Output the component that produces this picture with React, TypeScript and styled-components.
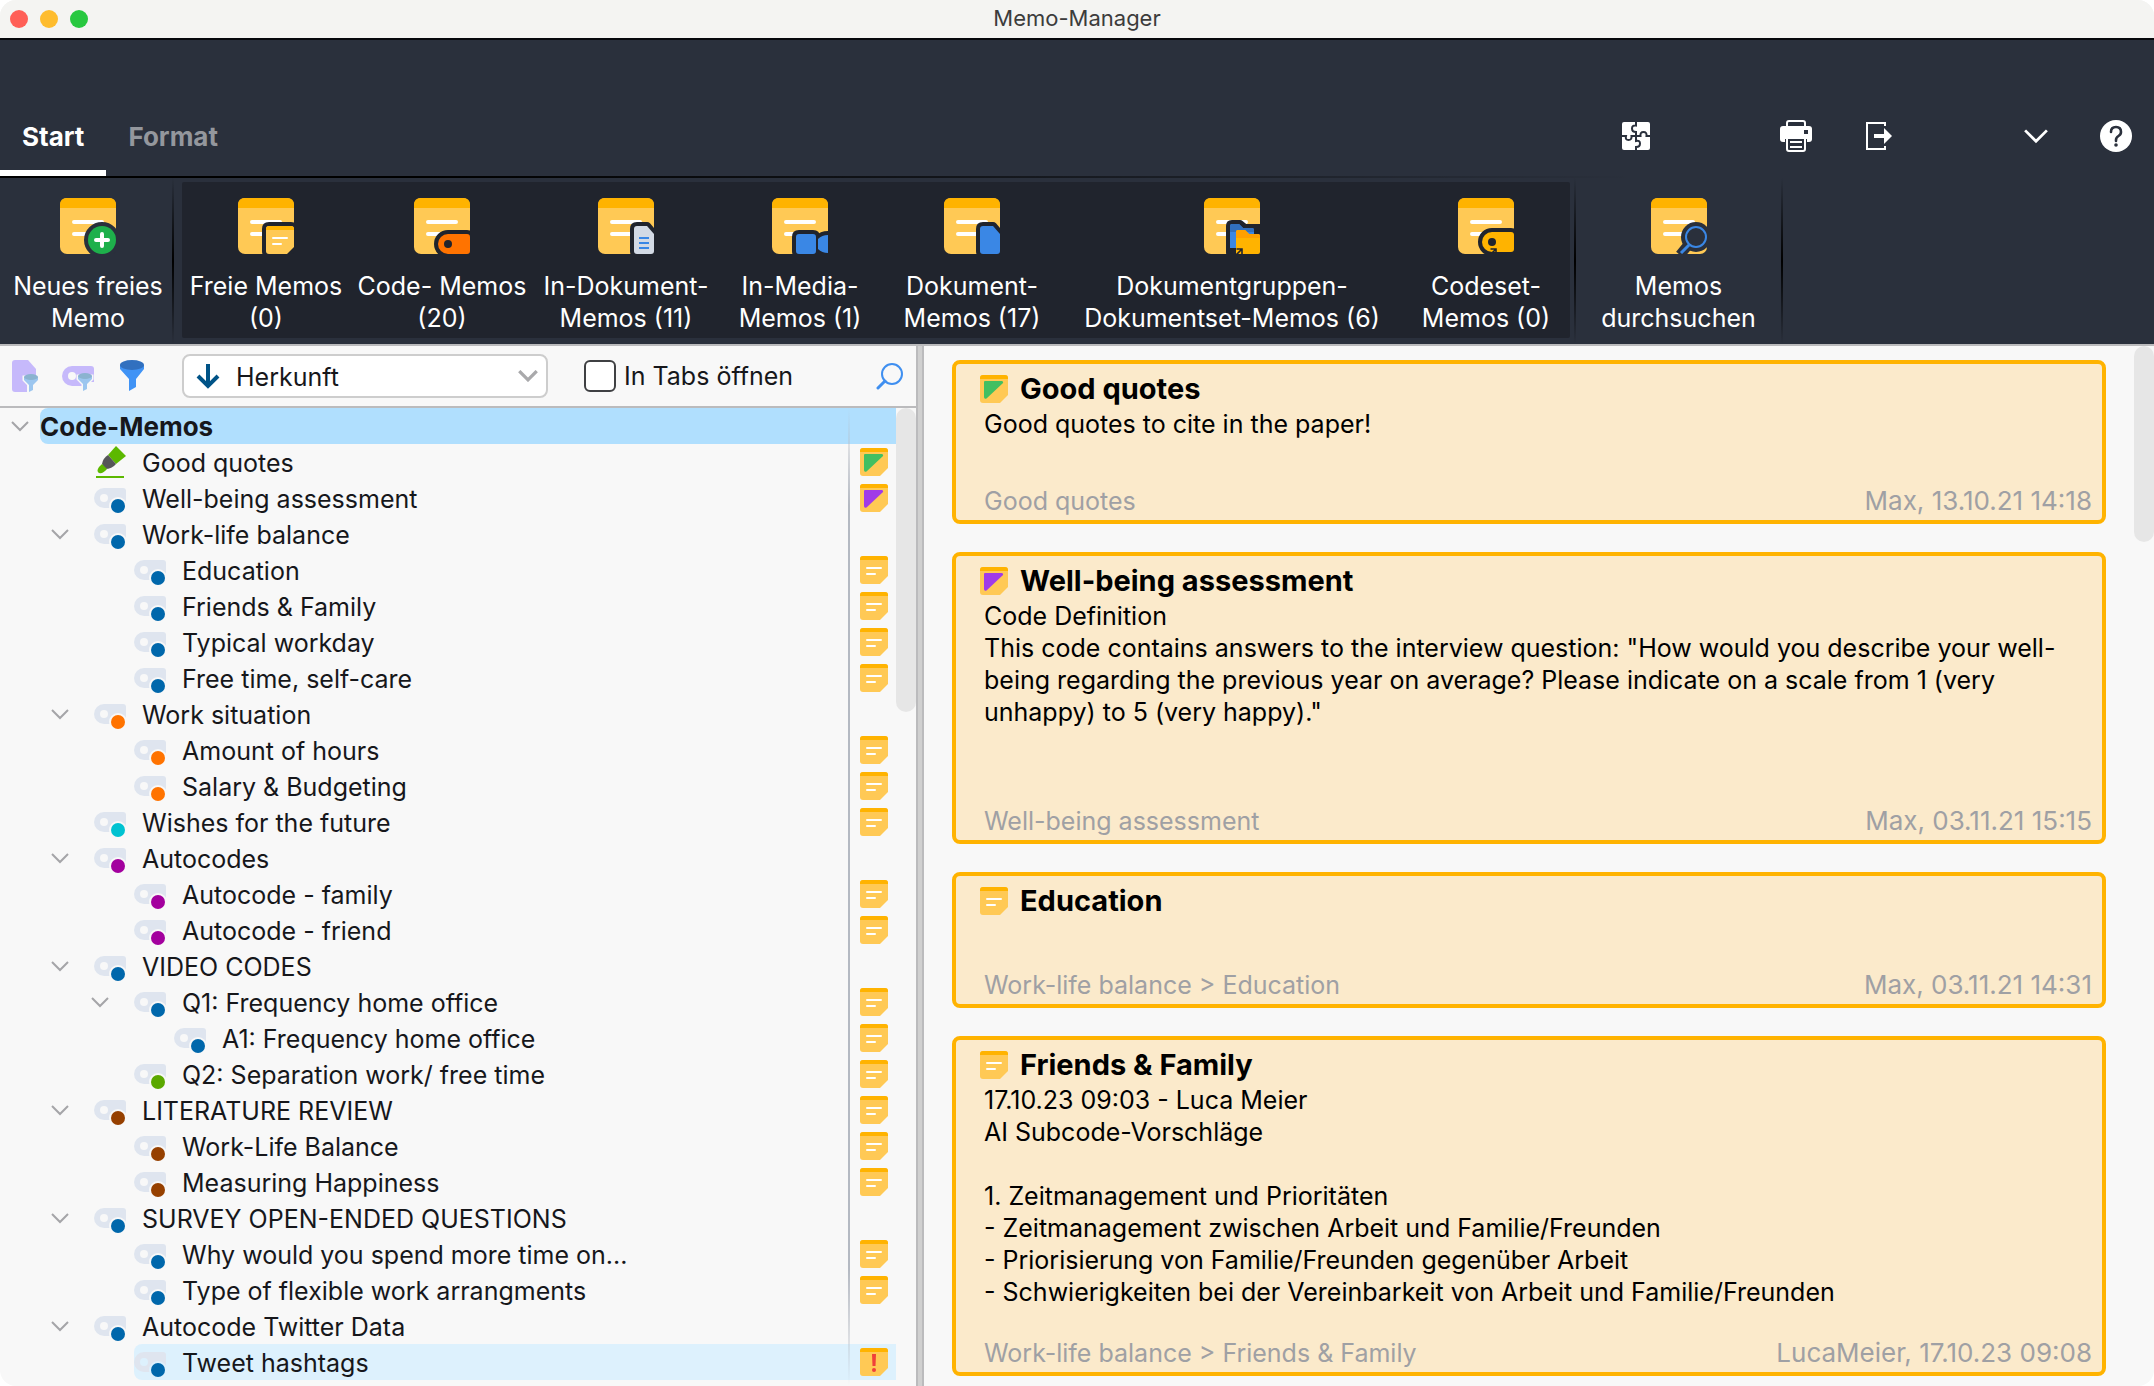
import React from "react";
import styled, { createGlobalStyle } from "styled-components";

const c = {
  header: "#2a303c",
  group: "#20242d",
  panel: "#f8f8f8",
  line: "#bbbbbd",
  amber: "#ffb300",
  note: "#ffc955",
  blue: "#3a87e5",
  tag: "#dfe5ef",
};

const Global = createGlobalStyle`
  html, body { margin: 0; background: #fff; }
  *, *::before, *::after { box-sizing: border-box; }
  body, button, select, input { font-family: Inter, "Liberation Sans", sans-serif; font-size: 25px; }
  button { border: 0; padding: 0; background: none; color: inherit; cursor: pointer; }
  ul { list-style: none; margin: 0; padding: 0; }
  h1, h2, p { margin: 0; }
  svg { display: block; flex: none; }
`;

const Window = styled.div`
  display: flex;
  flex-direction: column;
  height: 100vh;
  overflow: hidden;
  border-radius: 16px;
  background: ${c.panel};
  color: #16171b;
`;

const TitleBar = styled.header`
  display: grid;
  grid-template-columns: 1fr auto 1fr;
  align-items: center;
  flex: none;
  height: 40px;
  padding: 0 10px;
  background: #f4f4f2;
  border-bottom: 2px solid #06080c;
`;
const Lights = styled.div`
  display: flex;
  gap: 12px;
`;
const Light = styled.button<{ $color: string }>`
  width: 18px;
  height: 18px;
  border-radius: 50%;
  background: ${(p) => p.$color};
`;
const WindowTitle = styled.h1`
  padding-bottom: 2px;
  font-size: 22px;
  font-weight: 400;
  line-height: 32px;
  color: #3c3c3c;
`;

const Ribbon = styled.div`
  flex: none;
  background: ${c.header};
  color: #fff;
  border-bottom: 2px solid ${c.line};
`;
const RibbonTop = styled.div`
  display: flex;
  align-items: flex-end;
  justify-content: space-between;
  height: 136px;
`;
const Tabs = styled.nav`
  display: flex;
`;
const Tab = styled.button<{ $active?: boolean }>`
  height: 78px;
  padding: 4px 22px 0;
  font-size: 26px;
  font-weight: 700;
  color: ${(p) => (p.$active ? "#fff" : "#94979d")};
  border-bottom: 6px solid ${(p) => (p.$active ? "#fff" : "transparent")};
`;
const Tools = styled.div`
  display: flex;
  align-items: center;
  height: 80px;
  padding-right: 22px;
`;
const ToolButton = styled.button<{ $gap: number }>`
  margin-left: ${(p) => p.$gap}px;
`;
const Fade = styled.div`
  height: 2px;
  background: linear-gradient(to right, #000, #000 20%, transparent 76%);
`;
const RibbonRow = styled.div`
  display: flex;
  height: 166px;
  padding-left: 4px;
`;
const Divider = styled.div`
  width: 2px;
  background: linear-gradient(${c.header}, #000 50%, ${c.header});
`;
const Group = styled.div`
  display: flex;
  margin: 4px 4px 6px 8px;
  background: ${c.group};
  border-radius: 2px;
`;
const RibbonButton = styled.button<{ $width: number; $inGroup?: boolean }>`
  display: flex;
  flex-direction: column;
  align-items: center;
  gap: 16px;
  width: ${(p) => p.$width}px;
  padding-top: ${(p) => (p.$inGroup ? 16 : 20)}px;
  line-height: 32px;
  white-space: pre;
`;

const Main = styled.main`
  display: flex;
  flex: 1;
  min-height: 0;
`;
const Side = styled.section`
  display: flex;
  flex-direction: column;
  flex: none;
  width: 916px;
`;
const FilterBar = styled.div`
  display: flex;
  align-items: center;
  flex: none;
  height: 62px;
  padding: 0 12px;
  border-bottom: 2px solid ${c.line};
`;
const FilterButtons = styled.div`
  display: flex;
  align-items: center;
  gap: 24px;
  width: 170px;
`;
const SelectBox = styled.div`
  display: flex;
  align-items: center;
  width: 366px;
  height: 44px;
  padding: 0 8px 0 12px;
  background: #fff;
  border: 2px solid #cdcdcd;
  border-radius: 8px;
`;
const Select = styled.select`
  flex: 1;
  height: 40px;
  padding: 2px 0 0 16px;
  border: 0;
  background: transparent;
  color: inherit;
  appearance: none;
  outline: none;
`;
const CheckLabel = styled.label`
  display: flex;
  align-items: center;
  flex: 1;
  gap: 8px;
  margin-left: 36px;
`;
const Checkbox = styled.input`
  appearance: none;
  width: 32px;
  height: 32px;
  margin: 0;
  border: 2px solid #3f4043;
  border-radius: 6px;
  background: #fff;
`;
const TreeArea = styled.div`
  display: flex;
  flex: 1;
  min-height: 0;
  overflow: hidden;
`;
const Tree = styled.ul`
  flex: 1;
  position: relative;
`;
const ColumnLine = styled.li`
  position: absolute;
  top: 0;
  bottom: 0;
  right: 46px;
  width: 2px;
  background: linear-gradient(transparent, #b4b9c2 10%, #b4b9c2 88%, transparent);
`;
const Row = styled.li<{ $level: number }>`
  display: flex;
  height: 36px;
  padding-left: ${(p) => p.$level * 40}px;
`;
const Toggle = styled.button`
  display: flex;
  justify-content: center;
  align-items: center;
  width: 40px;
`;
const RowBody = styled.div<{ $bg?: string; $root?: boolean }>`
  display: flex;
  align-items: center;
  flex: 1;
  gap: 16px;
  padding-right: 8px;
  font-size: ${(p) => (p.$root ? 26 : 25)}px;
  font-weight: ${(p) => (p.$root ? 700 : 400)};
  background: ${(p) => p.$bg || "transparent"};
  border-radius: 8px 0 0 8px;
`;
const Spacer = styled.span`
  width: 14px;
`;
const RowText = styled.span`
  flex: 1;
  padding-top: 2px;
  line-height: 34px;
  white-space: nowrap;
`;
const Scroll = styled.div<{ $thumb: number }>`
  flex: none;
  width: 20px;
  &::before {
    content: "";
    display: block;
    height: ${(p) => p.$thumb}px;
    border-radius: 10px;
    background: #e6e6e6;
  }
`;
const Splitter = styled.div`
  flex: none;
  width: 8px;
  background: #d0d0d0;
  border: solid ${c.line};
  border-width: 0 2px;
`;
const Cards = styled.section`
  display: flex;
  flex-direction: column;
  flex: 1;
  gap: 28px;
  padding: 14px 28px 10px;
`;
const Card = styled.article<{ $min: number }>`
  display: flex;
  flex-direction: column;
  flex: none;
  min-height: ${(p) => p.$min}px;
  padding: 6px 10px 3px 28px;
  background: #fbeacb;
  border: 4px solid ${c.amber};
  border-radius: 8px;
  color: #000;
`;
const CardHead = styled.div`
  display: flex;
  align-items: center;
  gap: 12px;
  height: 38px;
  margin-left: -4px;
`;
const CardTitle = styled.h2`
  font-size: 29px;
  line-height: 36px;
`;
const CardText = styled.p`
  flex: 1;
  line-height: 32px;
  white-space: pre-line;
`;
const CardFoot = styled.footer`
  display: flex;
  justify-content: space-between;
  line-height: 32px;
  color: #9fa0a4;
`;
const CardDate = styled.time`
  font-size: 26px;
`;

type Badge = "plus" | "note" | "code" | "indoc" | "media" | "doc" | "groups" | "codeset" | "search";

function BadgeShape({ kind, bg }: { kind: Badge; bg: string }) {
  const cut = { stroke: bg, strokeWidth: 8, strokeLinejoin: "round" as const, paintOrder: "stroke" };
  const docPath = "M39 28H49L56 36V53Q56 56 53 56H39Q36 56 36 53V31Q36 28 39 28Z";
  const arrow = <path d="M31 58L38 51M32.500 51H38V57" fill="none" stroke={bg} strokeWidth="1.600" />;
  switch (kind) {
    case "plus":
      return (
        <g>
          <circle cx="42" cy="42" r="14" fill="#1eb04b" {...cut} />
          <path d="M42 36V48M36 42H48" stroke="#fff" strokeWidth="4" strokeLinecap="round" />
        </g>
      );
    case "note":
      return (
        <g>
          <path d="M31 28H53Q56 28 56 31V49L49 56H31Q28 56 28 53V31Q28 28 31 28Z" fill={c.note} {...cut} />
          <path d="M31 28H53Q56 28 56 31V32H28V31Q28 28 31 28Z" fill={c.amber} />
          <path d="M35 40H49M35 46H43" stroke="#fff" strokeWidth="2" strokeLinecap="round" />
        </g>
      );
    case "code":
      return (
        <g>
          <path d="M34 36H53Q56 36 56 39V53Q56 56 53 56H34A10 10 0 0 1 34 36Z" fill="#ff7300" {...cut} />
          <circle cx="34" cy="46" r="4" fill={bg} />
        </g>
      );
    case "indoc":
      return (
        <g>
          <path d={docPath} fill="#d3dae5" {...cut} />
          <path d="M41 40H51M41 45H51M41 50H51" stroke={c.blue} strokeWidth="2" />
        </g>
      );
    case "doc":
      return <path d={docPath} fill={c.blue} {...cut} />;
    case "media":
      return (
        <path
          d="M27 36H41Q44 36 44 39V53Q44 56 41 56H27Q24 56 24 53V39Q24 36 27 36ZM46 41Q50 37 56 37V55Q50 55 46 51Z"
          fill={c.blue}
          {...cut}
        />
      );
    case "groups":
      return (
        <g>
          <path d="M28 26H36L41 30H56V56H28Q26 56 26 54V28Q26 26 28 26Z" fill={bg} {...cut} />
          <path d="M28 26H35L39 30H48Q50 30 50 32V50H26V28Q26 26 28 26Z" fill={c.blue} />
          <path d="M28 26H35L39 30H48Q50 30 50 32V34H26V28Q26 26 28 26Z" fill="#3170bf" />
          <path d="M34 32H41L45 36H54Q56 36 56 38V54Q56 56 54 56H32V34Q32 32 34 32Z" fill={c.amber} />
          <path d="M34 32H41L45 36H54Q56 36 56 38V40H32V34Q32 32 34 32Z" fill="#ffa000" />
          {arrow}
        </g>
      );
    case "codeset":
      return (
        <g>
          <path d="M34 34H53Q56 34 56 37V51Q56 54 53 54H34A10 10 0 0 1 34 34Z" fill={c.amber} {...cut} />
          <circle cx="34" cy="44" r="4" fill={bg} />
          {arrow}
        </g>
      );
    default:
      return (
        <g>
          <path d="M38 46L29 57" stroke={bg} strokeWidth="10" />
          <circle cx="45" cy="39" r="15" fill={bg} />
          <circle cx="45" cy="39" r="10" fill={bg} stroke={c.blue} strokeWidth="2" />
          <path d="M38 47L30 55" stroke={c.blue} strokeWidth="3" />
        </g>
      );
  }
}

function MemoIcon({ badge, bg }: { badge: Badge; bg: string }) {
  return (
    <svg width="56" height="56" viewBox="0 0 56 56" overflow="hidden" aria-hidden="true">
      <rect width="56" height="56" rx="7" fill={c.note} />
      <path d="M0 10V7Q0 0 7 0H49Q56 0 56 7V10Z" fill={c.amber} />
      <path d="M14 24H42M14 36H32" stroke="#fff" strokeWidth="4" strokeLinecap="round" />
      <BadgeShape kind={badge} bg={bg} />
    </svg>
  );
}

type Mark = "lines" | "green" | "purple" | "alert";

function NoteIcon({ mark }: { mark: Mark }) {
  return (
    <svg width="28" height="28" viewBox="0 0 28 28" aria-hidden="true">
      <path d="M3 0H25Q28 0 28 3V20L20 28H3Q0 28 0 25V3Q0 0 3 0Z" fill={c.note} />
      <path d="M3 0H25Q28 0 28 3V4H0V3Q0 0 3 0Z" fill={c.amber} />
      {mark === "lines" && <path d="M7 12H21M7 18H15" stroke="#fff" strokeWidth="2" strokeLinecap="round" />}
      {mark === "alert" && (
        <g fill="#f0403a">
          <path d="M12 6H16L15.500 18H12.500Z" />
          <circle cx="14" cy="22" r="2" />
        </g>
      )}
      {(mark === "green" || mark === "purple") && (
        <path
          d="M5 6H22Q24 7 22.500 8.500L6.500 23.500Q4 24.500 4 22V7Q4 6 5 6Z"
          fill={mark === "green" ? "#42bf61" : "#a03be8"}
        />
      )}
    </svg>
  );
}

function CodeIcon({ color, bg }: { color: string; bg: string }) {
  return (
    <svg width="32" height="36" viewBox="0 0 32 36" aria-hidden="true">
      <path d="M10 8H29Q32 8 32 11V28H10A10 10 0 0 1 10 8Z" fill={c.tag} />
      <circle cx="10" cy="18" r="4" fill={bg} />
      <circle cx="24" cy="26" r="9" fill={bg} />
      <circle cx="24" cy="26" r="7" fill={color} />
    </svg>
  );
}

function MarkerIcon() {
  return (
    <svg width="32" height="36" viewBox="0 0 32 36" aria-hidden="true">
      <path d="M22 2L32 12L22 20L14 11Z" fill="#5cb800" />
      <path d="M14 11L22 20Q18 25 11 25L8 20Q9 14 14 11Z" fill="#555658" />
      <path d="M8 20L13 25Q9 30 5 29Q2 27 5 23Z" fill="#5cb800" />
      <path d="M2 33H30" stroke="#5cb800" strokeWidth="2" />
    </svg>
  );
}

function Chevron({ width, stroke, weight }: { width: number; stroke: string; weight: number }) {
  return (
    <svg width={width} height={width / 2 + 2} viewBox="0 0 18 11" fill="none" stroke={stroke} strokeWidth={weight} aria-hidden="true">
      <path d="M1 1L9 9L17 1" />
    </svg>
  );
}

function SearchIcon() {
  return (
    <svg width="28" height="28" viewBox="0 0 28 28" fill="none" stroke="#3f8ff0" aria-hidden="true">
      <circle cx="16" cy="12" r="10" strokeWidth="2" />
      <path d="M9 19L2 26" strokeWidth="3" strokeLinecap="round" />
    </svg>
  );
}

function SmallFunnel({ x, y }: { x: number; y: number }) {
  return (
    <g transform={`translate(${x} ${y})`}>
      <path d="M0 3V6L5 11V18L9 16V11L14 6V3Z" fill="#9cc6ef" stroke={c.panel} strokeWidth="3" paintOrder="stroke" />
      <ellipse cx="7" cy="3" rx="7" ry="3" fill="#8bb3d0" />
    </g>
  );
}

const ribbonItems: { badge: Badge; width: number; text: string }[] = [
  { badge: "note", width: 168, text: "Freie Memos\n(0)" },
  { badge: "code", width: 184, text: "Code- Memos\n(20)" },
  { badge: "indoc", width: 184, text: "In-Dokument-\nMemos (11)" },
  { badge: "media", width: 164, text: "In-Media-\nMemos (1)" },
  { badge: "doc", width: 180, text: "Dokument-\nMemos (17)" },
  { badge: "groups", width: 340, text: "Dokumentgruppen-\nDokumentset-Memos (6)" },
  { badge: "codeset", width: 168, text: "Codeset-\nMemos (0)" },
];

const BLUE = "#0067ab";
const ORANGE = "#ff7300";
const CYAN = "#00c2d1";
const PURPLE = "#a3009e";
const GREEN = "#5aa800";
const BROWN = "#964000";

type Node = { text: string; level: number; color?: string; open?: boolean; memo?: Mark; bg?: string };
const nodes: Node[] = [
  { text: "Good quotes", level: 1, memo: "green" },
  { text: "Well-being assessment", level: 1, color: BLUE, memo: "purple" },
  { text: "Work-life balance", level: 1, color: BLUE, open: true },
  { text: "Education", level: 2, color: BLUE, memo: "lines" },
  { text: "Friends & Family", level: 2, color: BLUE, memo: "lines" },
  { text: "Typical workday", level: 2, color: BLUE, memo: "lines" },
  { text: "Free time, self-care", level: 2, color: BLUE, memo: "lines" },
  { text: "Work situation", level: 1, color: ORANGE, open: true },
  { text: "Amount of hours", level: 2, color: ORANGE, memo: "lines" },
  { text: "Salary & Budgeting", level: 2, color: ORANGE, memo: "lines" },
  { text: "Wishes for the future", level: 1, color: CYAN, memo: "lines" },
  { text: "Autocodes", level: 1, color: PURPLE, open: true },
  { text: "Autocode - family", level: 2, color: PURPLE, memo: "lines" },
  { text: "Autocode - friend", level: 2, color: PURPLE, memo: "lines" },
  { text: "VIDEO CODES", level: 1, color: BLUE, open: true },
  { text: "Q1: Frequency home office", level: 2, color: BLUE, open: true, memo: "lines" },
  { text: "A1: Frequency home office", level: 3, color: BLUE, memo: "lines" },
  { text: "Q2: Separation work/ free time", level: 2, color: GREEN, memo: "lines" },
  { text: "LITERATURE REVIEW", level: 1, color: BROWN, open: true, memo: "lines" },
  { text: "Work-Life Balance", level: 2, color: BROWN, memo: "lines" },
  { text: "Measuring Happiness", level: 2, color: BROWN, memo: "lines" },
  { text: "SURVEY OPEN-ENDED QUESTIONS", level: 1, color: BLUE, open: true },
  { text: "Why would you spend more time on...", level: 2, color: BLUE, memo: "lines" },
  { text: "Type of flexible work arrangments", level: 2, color: BLUE, memo: "lines" },
  { text: "Autocode Twitter Data", level: 1, color: BLUE, open: true },
  { text: "Tweet hashtags", level: 2, color: BLUE, memo: "alert", bg: "#ddf1fd" },
];

const cards: { title: string; mark: Mark; min: number; text: string; path: string; date: string }[] = [
  {
    title: "Good quotes",
    mark: "green",
    min: 164,
    text: "Good quotes to cite in the paper!",
    path: "Good quotes",
    date: "Max, 13.10.21 14:18",
  },
  {
    title: "Well-being assessment",
    mark: "purple",
    min: 292,
    text: 'Code Definition\nThis code contains answers to the interview question: "How would you describe your well-being regarding the previous year on average? Please indicate on a scale from 1 (very unhappy) to 5 (very happy)."',
    path: "Well-being assessment",
    date: "Max, 03.11.21 15:15",
  },
  {
    title: "Education",
    mark: "lines",
    min: 136,
    text: "",
    path: "Work-life balance > Education",
    date: "Max, 03.11.21 14:31",
  },
  {
    title: "Friends & Family",
    mark: "lines",
    min: 340,
    text: "17.10.23 09:03 - Luca Meier\nAI Subcode-Vorschläge\n\n1. Zeitmanagement und Prioritäten\n- Zeitmanagement zwischen Arbeit und Familie/Freunden\n- Priorisierung von Familie/Freunden gegenüber Arbeit\n- Schwierigkeiten bei der Vereinbarkeit von Arbeit und Familie/Freunden",
    path: "Work-life balance > Friends & Family",
    date: "LucaMeier, 17.10.23 09:08",
  },
];

export default function App() {
  return (
    <Window>
      <Global />
      <TitleBar>
        <Lights>
          <Light $color="#ff5f57" aria-label="Schließen" />
          <Light $color="#febc2e" aria-label="Minimieren" />
          <Light $color="#28c840" aria-label="Vergrößern" />
        </Lights>
        <WindowTitle>Memo-Manager</WindowTitle>
      </TitleBar>

      <Ribbon>
        <RibbonTop>
          <Tabs>
            <Tab $active>Start</Tab>
            <Tab>Format</Tab>
          </Tabs>
          <Tools>
            <ToolButton $gap={0} aria-label="Erweiterungen">
              <svg width="28" height="28" viewBox="0 0 28 28" fill="none" stroke={c.header} strokeWidth="2">
                <rect width="28" height="28" rx="2" fill="#fff" stroke="none" />
                <path d="M14 0V3.500Q10 3 10 6.500T14 10V19Q18 18 18 21.500T14 25V28M0 14H4Q3 18 6.500 18T9.500 14H18.500Q18 10 21.500 10T24.500 14H28" />
              </svg>
            </ToolButton>
            <ToolButton $gap={130} aria-label="Drucken">
              <svg width="32" height="32" viewBox="0 0 32 32" fill="none" stroke="#fff" strokeWidth="2">
                <path d="M7 7V3Q7 1 9 1H23Q25 1 25 3V7" />
                <path d="M3 6H29Q32 6 32 9V19Q32 22 29 22H3Q0 22 0 19V9Q0 6 3 6Z" fill="#fff" stroke="none" />
                <rect x="24" y="10" width="4" height="4" fill={c.header} stroke="none" />
                <path d="M5 19H27V31H5Z" fill={c.header} stroke="none" />
                <path d="M7 19V29Q7 31 9 31H23Q25 31 25 29V19M10 22H22M10 27H22" />
              </svg>
            </ToolButton>
            <ToolButton $gap={54} aria-label="Exportieren">
              <svg width="26" height="28" viewBox="0 0 26 28" fill="none" stroke="#fff" strokeWidth="2">
                <path d="M19 4V1H1V27H19V24" />
                <path d="M8 14H20" strokeWidth="4" />
                <path d="M18 6L26 14L18 22Z" fill="#fff" stroke="none" />
              </svg>
            </ToolButton>
            <ToolButton $gap={131} aria-label="Menüband einklappen">
              <Chevron width={26} stroke="#fff" weight={2} />
            </ToolButton>
            <ToolButton $gap={51} aria-label="Hilfe">
              <svg width="32" height="32" viewBox="0 0 32 32" fill="none" stroke={c.header} strokeWidth="2.600">
                <circle cx="16" cy="16" r="16" fill="#fff" stroke="none" />
                <path d="M11 12Q11 7 16 7T21 12Q21 14.500 18.500 16T16 20V21" strokeLinecap="round" />
                <circle cx="16" cy="25" r="1.800" fill={c.header} stroke="none" />
              </svg>
            </ToolButton>
          </Tools>
        </RibbonTop>
        <Fade />
        <RibbonRow>
          <RibbonButton $width={168}>
            <MemoIcon badge="plus" bg={c.header} />
            {"Neues freies\nMemo"}
          </RibbonButton>
          <Divider />
          <Group>
            {ribbonItems.map((item) => (
              <RibbonButton key={item.badge} $width={item.width} $inGroup>
                <MemoIcon badge={item.badge} bg={c.group} />
                {item.text}
              </RibbonButton>
            ))}
          </Group>
          <Divider />
          <RibbonButton $width={205}>
            <MemoIcon badge="search" bg={c.header} />
            {"Memos\ndurchsuchen"}
          </RibbonButton>
          <Divider />
        </RibbonRow>
      </Ribbon>

      <Main>
        <Side>
          <FilterBar>
            <FilterButtons>
              <button aria-label="Aktivierte Dokumente">
                <svg width="26" height="32" viewBox="0 0 26 32">
                  <path d="M3 0H16L24 9V32H3Q0 32 0 29V3Q0 0 3 0Z" fill="#c6b9fb" />
                  <path d="M15 22H26V32H15Z" fill={c.panel} />
                  <SmallFunnel x={12} y={14} />
                </svg>
              </button>
              <button aria-label="Aktivierte Codes">
                <svg width="32" height="32" viewBox="0 0 32 32">
                  <path d="M10 6H29Q32 6 32 9V26H10A10 10 0 0 1 10 6Z" fill="#c6b9fb" />
                  <circle cx="10" cy="16" r="4" fill={c.panel} />
                  <path d="M20 22H32V32H20Z" fill={c.panel} />
                  <SmallFunnel x={16} y={13} />
                </svg>
              </button>
              <button aria-label="Filter">
                <svg width="26" height="32" viewBox="0 0 26 32">
                  <path d="M2 5V9L11 19V31L18 27V19L26 9V5Z" fill="#4093f5" />
                  <ellipse cx="14" cy="5" rx="12" ry="5" fill="#3170bf" />
                </svg>
              </button>
            </FilterButtons>
            <SelectBox>
              <svg width="24" height="26" viewBox="0 0 24 26" fill="none" stroke="#005387" strokeWidth="4" aria-hidden="true">
                <path d="M12 1V22M2 13L12 23L22 13" />
              </svg>
              <Select aria-label="Sortierung">
                <option>Herkunft</option>
              </Select>
              <Chevron width={20} stroke="#a9a9ab" weight={3} />
            </SelectBox>
            <CheckLabel>
              <Checkbox type="checkbox" />
              In Tabs öffnen
            </CheckLabel>
            <button aria-label="Suchen">
              <SearchIcon />
            </button>
          </FilterBar>
          <TreeArea>
            <Tree>
              <Row $level={0}>
                <Toggle aria-label="Code-Memos zuklappen">
                  <Chevron width={18} stroke="#a5a5a8" weight={2} />
                </Toggle>
                <RowBody $bg="#b0dffe" $root>
                  <RowText>Code-Memos</RowText>
                </RowBody>
              </Row>
              {nodes.map((n) => (
                <Row key={n.text} $level={n.level}>
                  <Toggle as={n.open ? "button" : "span"}>
                    {n.open && <Chevron width={18} stroke="#a5a5a8" weight={2} />}
                  </Toggle>
                  <Spacer />
                  <RowBody $bg={n.bg}>
                    {n.color ? <CodeIcon color={n.color} bg={n.bg || c.panel} /> : <MarkerIcon />}
                    <RowText>{n.text}</RowText>
                    {n.memo && <NoteIcon mark={n.memo} />}
                  </RowBody>
                </Row>
              ))}
              <ColumnLine aria-hidden="true" />
            </Tree>
            <Scroll $thumb={304} />
          </TreeArea>
        </Side>
        <Splitter />
        <Cards>
          {cards.map((card) => (
            <Card key={card.title} $min={card.min}>
              <CardHead>
                <NoteIcon mark={card.mark} />
                <CardTitle>{card.title}</CardTitle>
              </CardHead>
              <CardText>{card.text}</CardText>
              <CardFoot>
                <span>{card.path}</span>
                <CardDate>{card.date}</CardDate>
              </CardFoot>
            </Card>
          ))}
        </Cards>
        <Scroll $thumb={196} />
      </Main>
    </Window>
  );
}
